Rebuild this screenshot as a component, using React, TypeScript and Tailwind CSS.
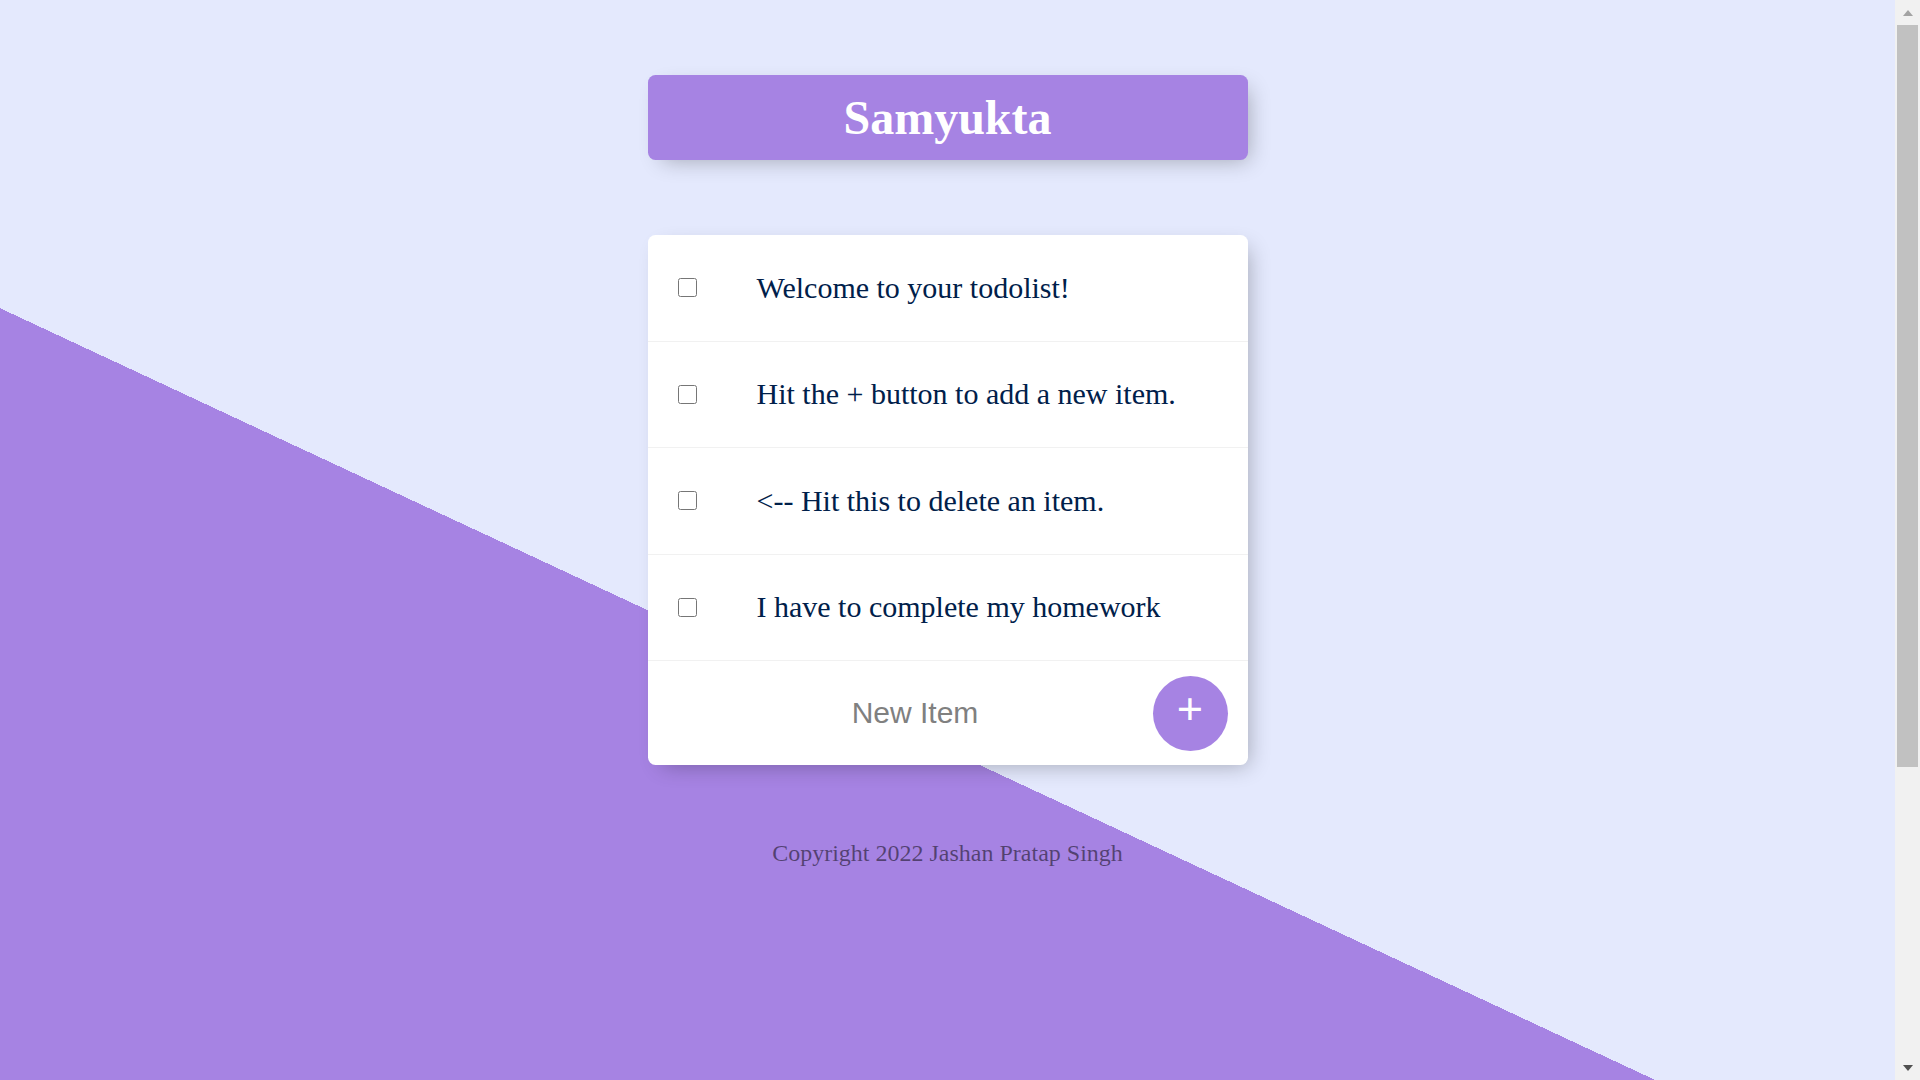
import React from "react";

const items = [
  "Welcome to your todolist!",
  "Hit the + button to add a new item.",
  "<-- Hit this to delete an item.",
  "I have to complete my homework",
];

const serif = "font-['Liberation_Serif','Times_New_Roman',serif]";

const TodoRow = ({ text }: { text: string }) => (
  <div className="flex min-h-[106.5px] items-center border-b border-[#F1F1F1]">
    <input
      type="checkbox"
      className="m-[30px] h-[19px] w-[19px] shrink-0 accent-[#A683E3]"
    />
    <p className={`${serif} p-[30px] text-[30px] leading-[34px] text-[#00204a]`}>
      {text}
    </p>
  </div>
);

// page scrollbar as seen in the screenshot
const ScrollBar = () => (
  <div className="flex h-screen w-[25px] shrink-0 flex-col bg-[#f1f1f1]">
    <div className="flex h-[25px] items-center justify-center">
      <div className="h-0 w-0 border-x-[5.5px] border-b-[6px] border-x-transparent border-b-[#a3a3a3]" />
    </div>
    <div className="mx-[2px] h-[742px] bg-[#c1c1c1]" />
    <div className="flex-1" />
    <div className="flex h-[25px] items-center justify-center">
      <div className="h-0 w-0 border-x-[5.5px] border-t-[6px] border-x-transparent border-t-[#505050]" />
    </div>
  </div>
);

export default function App() {
  return (
    <div className="flex h-screen overflow-hidden">
      <main className="min-w-0 flex-1 overflow-hidden">
        <div className="min-h-[1500px] bg-[linear-gradient(25deg,#A683E3_50%,#E4E9FD_50%)] pt-[75px]">
          {/* heading */}
          <div className="mx-auto w-[600px] rounded-[7.5px] bg-[#A683E3] p-[15px] text-center shadow-[7px_7px_22px_-7px_rgba(0,0,0,0.3)]">
            <h1 className={`${serif} text-[48px] font-bold leading-[55px] text-white`}>
              Samyukta
            </h1>
          </div>

          {/* list */}
          <div className="mx-auto mt-[75px] w-[600px] rounded-[7.5px] bg-white shadow-[7px_7px_22px_-7px_rgba(0,0,0,0.3)]">
            {items.map((t) => (
              <TodoRow key={t} text={t} />
            ))}
            <form
              className="flex min-h-[104px] items-center pl-[30px]"
              onSubmit={(e) => e.preventDefault()}
            >
              <input
                type="text"
                placeholder="New Item"
                autoComplete="off"
                className="h-[90px] w-[445px] pl-[30px] text-center font-['Liberation_Sans',Arial,sans-serif] text-[30px] text-[#00204a] outline-none placeholder:text-[grey]"
              />
              <button
                type="submit"
                className="ml-[30px] flex h-[75px] w-[75px] items-center justify-center rounded-full bg-[#A683E3] pb-[9px] font-['Liberation_Sans',Arial,sans-serif] text-[45px] leading-none text-white"
              >
                +
              </button>
            </form>
          </div>

          <footer className={`${serif} mt-[75px] text-center text-[24px] leading-[27px] text-black/50`}>
            Copyright 2022 Jashan Pratap Singh
          </footer>
        </div>
      </main>
      <ScrollBar />
    </div>
  );
}
